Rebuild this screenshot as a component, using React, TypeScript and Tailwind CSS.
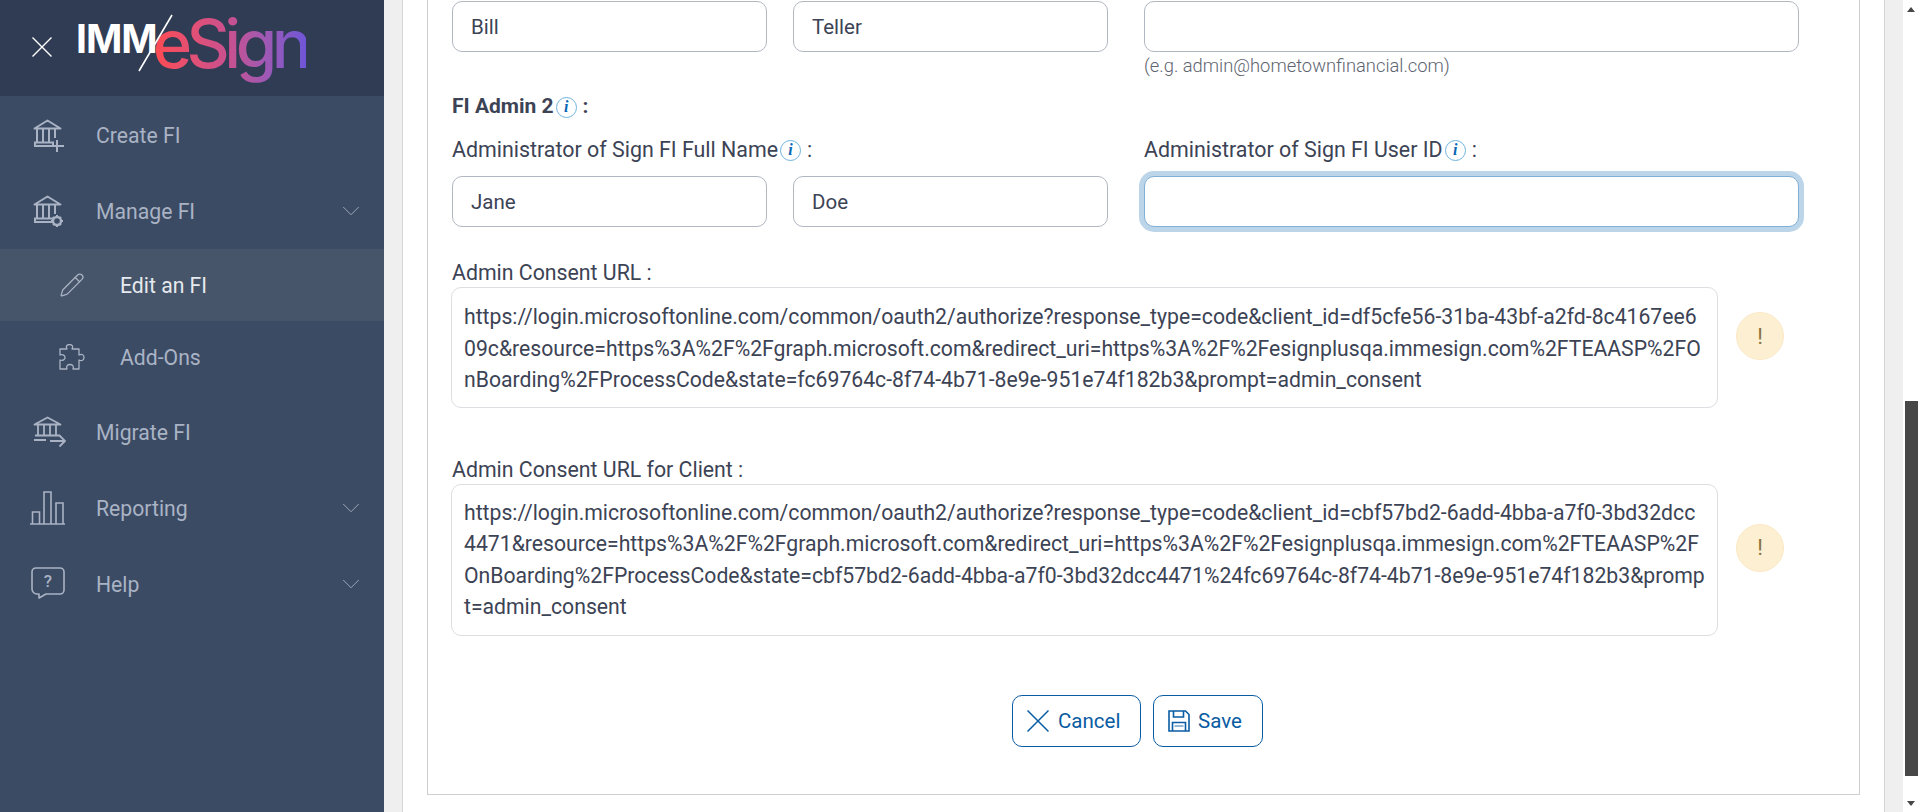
import { ChevronDown, Pencil } from 'lucide-react'

function BankBase() {
  return (
    <>
      <path d="M2.5 10.5 15.5 2.5l13 8z" strokeLinejoin="round" />
      <path d="M5 11v13M11 11v13M17 11v13M23 11v9" />
      <path d="M3 24.5h18v3.5H3z" />
    </>
  )
}

function CreateIcon() {
  return (
    <svg width="34" height="34" viewBox="0 0 34 34" fill="none" stroke="#a9b3c4" strokeWidth="2">
      <BankBase />
      <path d="M25 22v12M19 28h13" />
    </svg>
  )
}

function ManageIcon() {
  return (
    <svg width="34" height="34" viewBox="0 0 34 34" fill="none" stroke="#a9b3c4" strokeWidth="2">
      <BankBase />
      <circle cx="25" cy="27" r="4" strokeWidth="2.4" />
      <path d="M25 21v2M25 31v2M19 27h2M29 27h2M21 23l1.4 1.4M27.6 29.6 29 31M29 23l-1.4 1.4M22.4 29.6 21 31" strokeWidth="2" />
    </svg>
  )
}

function MigrateIcon() {
  return (
    <svg width="34" height="34" viewBox="0 0 34 34" fill="none" stroke="#a9b3c4" strokeWidth="1.8">
      <path d="M2.5 9.5 15.5 2.5l13 7z" strokeLinejoin="round" />
      <path d="M6 10v10M12 10v10M18 10v10M24 10v10M3 20.5h25M2 25h12" />
      <path d="M18 26h15M27.5 20.5 33 26l-5.500 5.500" />
    </svg>
  )
}

function ReportIcon() {
  return (
    <svg width="36" height="36" viewBox="0 0 36 36" fill="none" stroke="#a9b3c4" strokeWidth="1.6" className="ml-[-2px]">
      <path d="M0 34h35M2.500 34V22h7v12M14 34V2h7v32M26 34V13h7v21" />
    </svg>
  )
}

function HelpIcon() {
  return (
    <svg width="36" height="36" viewBox="0 0 36 36" fill="none" stroke="#a9b3c4" strokeWidth="1.6" className="ml-[-1px]">
      <path d="M5 2h24a4 4 0 0 1 4 4v18a4 4 0 0 1-4 4H15l-7 4v-4H6a5 5 0 0 1-5-5V6a4 4 0 0 1 4-4z" strokeLinejoin="round" />
      <text x="17" y="21" fontSize="17" fontFamily="Roboto, sans-serif" fontWeight="500" fill="#a9b3c4" stroke="none" textAnchor="middle">?</text>
    </svg>
  )
}

function PuzzleIcon() {
  return (
    <svg width="26" height="26" viewBox="0 0 26 26" fill="none" stroke="#a9b3c4" strokeWidth="1.3" strokeLinejoin="round">
      <path d="M1 25V16c3 1 5-.5 5-2.500s-2-3.500-5-2.500V5h7c-1.500-3 0-4.500 2.500-4.500s4 1.500 2.500 4.500h7v6c3-1.500 5 0 5 2.500s-2 4-5 2.500V25h-6c1-3-.5-4.500-3-4.500s-4 1.500-3 4.500z" />
    </svg>
  )
}

function NavItem({ icon, label, height, caret }: { icon: React.ReactNode; label: string; height: string; caret?: boolean }) {
  return (
    <div className={`flex items-center pl-[32px] pr-[18px] ${height}`}>
      <span className="w-[64px] flex items-center">{icon}</span>
      <span className="flex-1 pt-[2px] text-[21.200px] text-[#a9b3c4]">{label}</span>
      {caret && <ChevronDown size={30} strokeWidth={0.7} className="text-[#a9b3c4]" />}
    </div>
  )
}

function SubItem({ icon, label, active }: { icon: React.ReactNode; label: string; active?: boolean }) {
  return (
    <div className={`flex items-center h-[72px] pl-[59px] ${active ? 'bg-[#465569]' : ''}`}>
      <span className="w-[61px] flex items-center">{icon}</span>
      <span className={`pt-[2px] text-[21.200px] ${active ? 'text-[#e6e9ee]' : 'text-[#a9b3c4]'}`}>{label}</span>
    </div>
  )
}

function Info() {
  return (
    <span className="inline-flex items-center justify-center w-[21px] h-[21px] rounded-full border border-[#6fb3dc] text-[16px] font-bold italic text-[#0a67b5] leading-none ml-[2px] mr-[6px] [font-family:'Liberation_Serif',serif]">
      i
    </span>
  )
}

function TextBox({ value, focus, className }: { value?: string; focus?: boolean; className?: string }) {
  return (
    <input
      readOnly
      value={value ?? ''}
      className={`h-[51px] rounded-[10px] border bg-white px-[18px] text-[20.500px] text-[#3c4355] outline-none ${
        focus ? 'border-[#7fb0d8] ring-[5px] ring-[#bdd5e9]' : 'border-[#b1b7c1]'
      } ${className ?? ''}`}
    />
  )
}

function UrlBlock({ label, lines, labelTop, boxPad, circleOffset }: { label: string; lines: string[]; labelTop: string; boxPad: string; circleOffset: string }) {
  return (
    <div className={labelTop}>
      <div className="text-[21.300px] leading-[21px] text-[#3c4355] mb-[4px]">{label}</div>
      <div className="flex items-center">
        <div className={`w-[1267px] ml-[-1px] rounded-[10px] border border-[#dcdee2] px-[12px] text-[21.200px] leading-[31.500px] text-[#3c4355] ${boxPad}`}>
          {lines.map((line) => (
            <div key={line} className="whitespace-nowrap">{line}</div>
          ))}
        </div>
        <div className={`ml-[18px] w-[48px] h-[48px] rounded-full bg-[#fdf0d2] border border-[#fbe9c4] flex items-center justify-center text-[22px] text-[#8a7340] ${circleOffset}`}>
          !
        </div>
      </div>
    </div>
  )
}

export default function App() {
  return (
    <div className="flex h-[812px] w-[1920px] overflow-hidden bg-white [font-family:Roboto,sans-serif]">
      <aside className="w-[384px] shrink-0 bg-[#3c4b64]">
        <div className="h-[96px] bg-[#303c54] flex items-center pl-[32px]">
          <svg width="20" height="20" viewBox="0 0 20 20" stroke="#ffffff" strokeWidth="1.4" className="mt-[-2px]">
            <path d="M0.500 0.500 19.500 19.500M19.500 0.500 0.500 19.500" />
          </svg>
          <div className="relative ml-[24px] mt-[-6px] flex items-start h-[70px]">
            <span className="mt-[9px] text-[39px] font-bold text-white leading-none tracking-[-1px] [font-family:Inter,sans-serif]">IMM</span>
            <svg width="36" height="60" viewBox="0 0 36 60" stroke="#ffffff" strokeWidth="1.6" className="absolute left-[62px] top-[4px]">
              <path d="M34 1 1 57" />
            </svg>
            <span className="ml-[-4px] pb-[14px] text-[67px] font-medium leading-none tracking-[-5.500px] bg-gradient-to-r from-[#ff4a4f] via-[#c85090] to-[#6f55d8] bg-clip-text text-transparent [font-family:Inter,sans-serif]">
              eSign
            </span>
          </div>
        </div>
        <NavItem height="h-[77px]" icon={<CreateIcon />} label="Create FI" />
        <NavItem height="h-[76px]" icon={<ManageIcon />} label="Manage FI" caret />
        <SubItem active icon={<Pencil size={26} strokeWidth={1.2} className="text-[#a9b3c4]" />} label="Edit an FI" />
        <SubItem icon={<PuzzleIcon />} label="Add-Ons" />
        <NavItem height="h-[77px]" icon={<MigrateIcon />} label="Migrate FI" />
        <NavItem height="h-[76px]" icon={<ReportIcon />} label="Reporting" caret />
        <NavItem height="h-[76px]" icon={<HelpIcon />} label="Help" caret />
      </aside>

      <div className="w-[19px] shrink-0 bg-[#efefef] border-r border-[#d6d6d6]" />

      <main className="w-[1481px] shrink-0 px-[24px]">
        <div className="h-[795px] border-x border-b border-[#cfcfcf] pl-[24px] pt-[1px]">
          <div className="flex">
            <TextBox value="Bill" className="w-[315px]" />
            <TextBox value="Teller" className="w-[315px] ml-[26px]" />
            <TextBox className="w-[655px] ml-[36px]" />
          </div>
          <div className="ml-[692px] mt-[4px] text-[18.350px] leading-[20px] font-light text-[#5e6470]">(e.g. admin@hometownfinancial.com)</div>

          <div className="mt-[19px] flex items-center h-[24px] text-[21px] font-bold text-[#3c4355]">
            FI Admin 2<Info />:
          </div>
          <div className="mt-[19px] flex h-[24px] items-center text-[21.400px] text-[#3c4355]">
            <span className="w-[692px] flex items-center">
              Administrator of Sign FI Full Name<Info />:
            </span>
            <span className="flex items-center">
              Administrator of Sign FI User ID<Info />:
            </span>
          </div>
          <div className="flex mt-[14px]">
            <TextBox value="Jane" className="w-[315px]" />
            <TextBox value="Doe" className="w-[315px] ml-[26px]" />
            <TextBox focus className="w-[655px] ml-[36px]" />
          </div>

          <UrlBlock
            labelTop="mt-[35px]"
            boxPad="pt-[13px] pb-[11px]"
            circleOffset="mb-[22px]"
            label="Admin Consent URL :"
            lines={[
              'https://login.microsoftonline.com/common/oauth2/authorize?response_type=code&client_id=df5cfe56-31ba-43bf-a2fd-8c4167ee6',
              '09c&resource=https%3A%2F%2Fgraph.microsoft.com&redirect_uri=https%3A%2F%2Fesignplusqa.immesign.com%2FTEAASP%2FO',
              'nBoarding%2FProcessCode&state=fc69764c-8f74-4b71-8e9e-951e74f182b3&prompt=admin_consent',
            ]}
          />
          <UrlBlock
            labelTop="mt-[51px]"
            boxPad="py-[12px]"
            circleOffset="mb-[24px]"
            label="Admin Consent URL for Client :"
            lines={[
              'https://login.microsoftonline.com/common/oauth2/authorize?response_type=code&client_id=cbf57bd2-6add-4bba-a7f0-3bd32dcc',
              '4471&resource=https%3A%2F%2Fgraph.microsoft.com&redirect_uri=https%3A%2F%2Fesignplusqa.immesign.com%2FTEAASP%2F',
              'OnBoarding%2FProcessCode&state=cbf57bd2-6add-4bba-a7f0-3bd32dcc4471%24fc69764c-8f74-4b71-8e9e-951e74f182b3&promp',
              't=admin_consent',
            ]}
          />

          <div className="mt-[59px] ml-[560px] flex gap-[12px]">
            <button className="h-[52px] w-[129px] rounded-[10px] border border-[#0a5ca3] flex items-center pl-[14px] pt-[1px] text-[20.500px] text-[#0a5ca3]">
              <svg width="22" height="22" viewBox="0 0 22 22" stroke="#0a5ca3" strokeWidth="1.500" className="mr-[9px]">
                <path d="M0.500 0.500 21.500 21.500M21.500 0.500 0.500 21.500" />
              </svg>
              Cancel
            </button>
            <button className="h-[52px] w-[110px] rounded-[10px] border border-[#0a5ca3] flex items-center pl-[14px] pt-[1px] text-[20.500px] text-[#0a5ca3]">
              <svg width="22" height="22" viewBox="0 0 22 22" fill="none" stroke="#0a5ca3" strokeWidth="1.600" className="mr-[8px]">
                <path d="M1 1h16.500L21 4.500V21H1z" />
                <path d="M5.500 1v6h10V1M4.500 21v-8.500h13V21" />
                <path d="M6.500 16h9" stroke="#7fa8cc" />
              </svg>
              Save
            </button>
          </div>
        </div>
      </main>

      <div className="w-[19px] shrink-0 bg-[#efefef] border-l border-[#d6d6d6]" />

      <div className="w-[17px] shrink-0 relative bg-white">
        <div className="absolute left-[2px] top-[401px] h-[375px] w-[13px] bg-[#474747]" />
        <div className="absolute left-[4px] top-[7px] border-x-[4px] border-b-[5px] border-x-transparent border-b-[#474747]" />
        <div className="absolute left-[4px] top-[801px] border-x-[4px] border-t-[5px] border-x-transparent border-t-[#474747]" />
      </div>
    </div>
  )
}
